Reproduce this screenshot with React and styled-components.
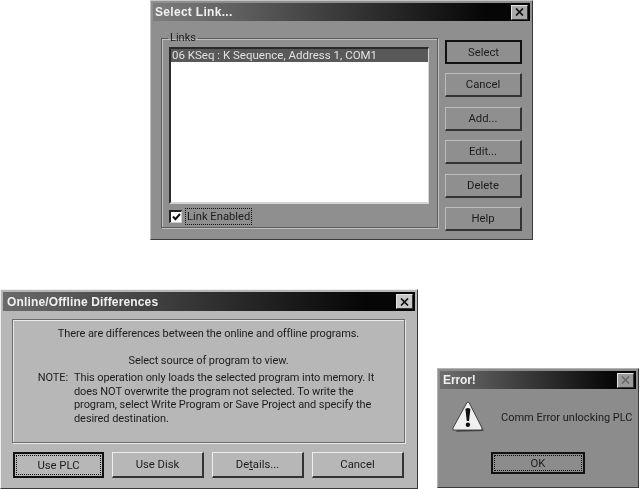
import React from "react";
import styled, { createGlobalStyle } from "styled-components";

const GlobalStyle = createGlobalStyle`
  html, body {
    margin: 0;
    padding: 0;
    background: #fff;
  }
  body {
    font-family: Roboto, "Liberation Sans", Arial, sans-serif;
    font-size: 11px;
    color: #1c1c1c;
  }
`;

const Desktop = styled.div`
  position: relative;
  width: 644px;
  height: 489px;
  overflow: hidden;
  background: #fff;
  filter: blur(0.3px);
`;

const Window = styled.div`
  position: absolute;
  left: ${(p) => p.$left}px;
  top: ${(p) => p.$top}px;
  width: ${(p) => p.$width}px;
  height: ${(p) => p.$height}px;
  box-sizing: border-box;
  padding: 2px;
  display: flex;
  flex-direction: column;
  background: ${(p) => p.$bg};
  border-top: 1px solid ${(p) => p.$light};
  border-left: 1px solid ${(p) => p.$light};
  border-right: 1px solid #3a3a3a;
  border-bottom: 1px solid #3a3a3a;
`;

const TitleBar = styled.div`
  flex: none;
  height: ${(p) => p.$height}px;
  display: flex;
  align-items: center;
  justify-content: space-between;
  padding: 0 2px 0 ${(p) => p.$inset}px;
  background: linear-gradient(90deg, ${(p) => p.$from}, #060606 88%, #060606);
  color: #f0f0f0;
  font-family: "Liberation Sans", Arial, sans-serif;
  font-weight: 700;
  font-size: 12px;
  letter-spacing: ${(p) => p.$spacing}px;
`;

const CloseButton = styled.div`
  width: 15px;
  height: 13px;
  display: flex;
  align-items: center;
  justify-content: center;
  background: ${(p) => p.$bg};
  border-top: 1px solid #e4e4e4;
  border-left: 1px solid #e4e4e4;
  border-right: 1px solid #333;
  border-bottom: 1px solid #333;
`;

const Cross = ({ color }) => (
  <svg width="9" height="8" viewBox="0 0 9 8">
    <path d="M1 0.5 L8 7.5 M8 0.5 L1 7.5" stroke={color} strokeWidth="1.7" fill="none" />
  </svg>
);

const LinkBody = styled.div`
  flex: 1;
  display: flex;
  gap: 7px;
  padding: 11px 8px 8px 8px;
`;

const GroupBox = styled.fieldset`
  box-sizing: border-box;
  margin: 0;
  min-width: 0;
  border: 1px solid #5c5c5c;
  box-shadow: 1px 1px 0 #c0c0c0, inset 1px 1px 0 #c0c0c0;
`;

const LinksGroup = styled(GroupBox)`
  width: 278px;
  height: 196px;
  padding: 0 8px 0 7px;
  display: flex;
  flex-direction: column;
`;

const Legend = styled.legend`
  margin-left: -1px;
  padding: 0 2px;
  line-height: 12px;
`;

const ListBox = styled.div`
  box-sizing: border-box;
  height: 157px;
  margin-top: 3px;
  background: #fff;
  border-top: 2px solid #2a2a2a;
  border-left: 2px solid #2a2a2a;
  border-right: 1px solid #d4d4d4;
  border-bottom: 2px solid #d4d4d4;
`;

const SelectedRow = styled.div`
  height: 13px;
  line-height: 13px;
  padding-left: 1px;
  background: #595959;
  color: #e2e2e2;
  font-size: 11.5px;
  white-space: nowrap;
`;

const CheckRow = styled.div`
  display: flex;
  align-items: center;
  gap: 4px;
  margin-top: 5px;
  font-size: 11.2px;
`;

const CheckBox = styled.div`
  box-sizing: border-box;
  width: 13px;
  height: 13px;
  display: flex;
  align-items: center;
  justify-content: center;
  background: #fff;
  border-top: 2px solid #222;
  border-left: 2px solid #222;
  border-right: 1px solid #ccc;
  border-bottom: 1px solid #ccc;
`;

const FocusLabel = styled.span`
  padding: 0 1px;
  line-height: 15px;
  outline: 1px dotted #111;
`;

const ButtonColumn = styled.div`
  display: flex;
  flex-direction: column;
  gap: 9.4px;
  padding-top: 8px;
`;

const Button = styled.div`
  box-sizing: border-box;
  flex: none;
  width: ${(p) => p.$width}px;
  height: ${(p) => p.$height}px;
  display: flex;
  align-items: center;
  justify-content: center;
  color: #1c1c1c;
  font-size: 11.3px;
  background: ${(p) => p.$bg};
  border-top: ${(p) => (p.$default ? "2px solid #111" : `1px solid ${p.$light}`)};
  border-left: ${(p) => (p.$default ? "2px solid #111" : `1px solid ${p.$light}`)};
  border-right: 2px solid ${(p) => (p.$default ? "#111" : "#333")};
  border-bottom: 2px solid ${(p) => (p.$default ? "#111" : "#333")};
`;

const FocusRing = styled.span`
  flex: 1;
  align-self: stretch;
  margin: 2px;
  display: flex;
  align-items: center;
  justify-content: center;
  outline: 1px dotted #111;
`;

const DiffBody = styled.div`
  flex: 1;
  display: flex;
  flex-direction: column;
  padding: 8px 10px 0 9px;
`;

const MessageGroup = styled(GroupBox)`
  height: 124px;
  padding: 7px 0 0;
  text-align: center;
  letter-spacing: -0.08px;
  border-color: #6c6c6c;
  box-shadow: 1px 1px 0 #e8e8e8, inset 1px 1px 0 #e8e8e8;
`;

const MessageLine = styled.div`
  line-height: 14px;
  margin-bottom: ${(p) => p.$gap || 0}px;
`;

const NoteGrid = styled.div`
  display: grid;
  grid-template-columns: 55px 1fr;
  column-gap: 6px;
  margin-top: 3px;
  text-align: left;
  line-height: 13.6px;
`;

const NoteLabel = styled.div`
  text-align: right;
`;

const ButtonRow = styled.div`
  display: flex;
  justify-content: space-between;
  padding: 9px 1px 0;
`;

const ErrorBody = styled.div`
  flex: 1;
  display: flex;
  flex-direction: column;
  align-items: center;
`;

const ErrorMessage = styled.div`
  align-self: stretch;
  display: flex;
  align-items: center;
  gap: 16px;
  height: 56px;
  margin-bottom: 7px;
  padding-left: 12px;
  white-space: nowrap;
`;

const IconSlot = styled.div`
  flex: none;
  display: flex;
`;

const WarningIcon = () => (
  <svg width="33" height="33" viewBox="0 0 33 33">
    <path d="M17 4 L32 30 L4 31 Z" fill="#555" />
    <path d="M15 1.5 Q16 0.5 17 1.5 L30 27 Q30.5 29 29 29 L2 29 Q0.5 29 1 27 Z" fill="#f0f0f0" stroke="#222" strokeWidth="0.8" />
    <path d="M13.4 8 Q16 6 18.4 8 L17 20 L14.8 20 Z" fill="#111" />
    <circle cx="15.9" cy="23.8" r="2.2" fill="#111" />
  </svg>
);

const CheckMark = () => (
  <svg width="9" height="8" viewBox="0 0 9 8">
    <path d="M1 3.5 L3.4 6.2 L8 1" stroke="#111" strokeWidth="2" fill="none" />
  </svg>
);

const linkButtons = ["Select", "Cancel", "Add...", "Edit...", "Delete", "Help"];

const LinkWindow = () => (
  <Window $left={150} $top={0} $width={383} $height={240} $bg="#8f8f8f" $light="#c4c4c4">
    <TitleBar $height={18} $from="#7d7d7d" $spacing={0.3} $inset={2}>
      Select Link...
      <CloseButton $bg="#a8a8a8">
        <Cross color="#111" />
      </CloseButton>
    </TitleBar>
    <LinkBody>
      <LinksGroup>
        <Legend>Links</Legend>
        <ListBox>
          <SelectedRow>06 KSeq : K Sequence, Address 1, COM1</SelectedRow>
        </ListBox>
        <CheckRow>
          <CheckBox>
            <CheckMark />
          </CheckBox>
          <FocusLabel>Link Enabled</FocusLabel>
        </CheckRow>
      </LinksGroup>
      <ButtonColumn>
        {linkButtons.map((label, index) => (
          <Button key={label} $width={77} $height={24} $bg="#8f8f8f" $light="#bcbcbc" $default={index === 0}>
            {label}
          </Button>
        ))}
      </ButtonColumn>
    </LinkBody>
  </Window>
);

const diffButton = { $width: 92, $height: 26, $bg: "#b7b7b7", $light: "#eeeeee" };

const DiffWindow = () => (
  <Window $left={0} $top={289} $width={418} $height={200} $bg="#b7b7b7" $light="#efefef">
    <TitleBar $height={19} $from="#6a6a6a" $spacing={0.15} $inset={4}>
      Online/Offline Differences
      <CloseButton $bg="#c8c8c8">
        <Cross color="#111" />
      </CloseButton>
    </TitleBar>
    <DiffBody>
      <MessageGroup>
        <MessageLine $gap={13}>There are differences between the online and offline programs.</MessageLine>
        <MessageLine>Select source of program to view.</MessageLine>
        <NoteGrid>
          <NoteLabel>NOTE:</NoteLabel>
          <div>
            This operation only loads the selected program into memory. It
            <br />
            does NOT overwrite the program not selected. To write the
            <br />
            program, select Write Program or Save Project and specify the
            <br />
            desired destination.
          </div>
        </NoteGrid>
      </MessageGroup>
      <ButtonRow>
        <Button {...diffButton} $width={91} $default>
          <FocusRing>Use PLC</FocusRing>
        </Button>
        <Button {...diffButton}>Use Disk</Button>
        <Button {...diffButton}>
          <span>
            De<u>t</u>ails...
          </span>
        </Button>
        <Button {...diffButton}>Cancel</Button>
      </ButtonRow>
    </DiffBody>
  </Window>
);

const ErrorWindow = () => (
  <Window $left={437} $top={368} $width={202} $height={120} $bg="#8c8c8c" $light="#b4b4b4">
    <TitleBar $height={18} $from="#6e6e6e" $spacing={-0.1} $inset={3}>
      Error!
      <CloseButton $bg="#9a9a9a">
        <Cross color="#6a6a6a" />
      </CloseButton>
    </TitleBar>
    <ErrorBody>
      <ErrorMessage>
        <IconSlot>
          <WarningIcon />
        </IconSlot>
        <span>Comm Error unlocking PLC</span>
      </ErrorMessage>
      <Button $width={94} $height={22} $bg="#8c8c8c" $light="#b4b4b4" $default>
        <FocusRing>OK</FocusRing>
      </Button>
    </ErrorBody>
  </Window>
);

const App = () => (
  <Desktop>
    <GlobalStyle />
    <LinkWindow />
    <DiffWindow />
    <ErrorWindow />
  </Desktop>
);

export default App;
